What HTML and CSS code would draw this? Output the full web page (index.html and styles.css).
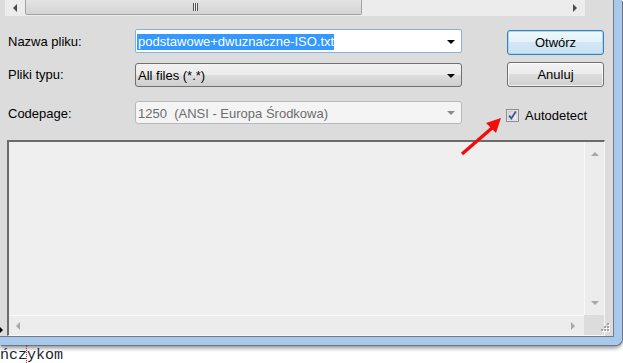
FILE: index.html
```html
<!DOCTYPE html>
<html lang="pl">
  <head>
    <meta charset="UTF-8" />
    <title>Otwórz plik</title>
    <link rel="stylesheet" href="styles.css">
  </head>
  <body>
    <div class="window">
      <div class="client">
        <div class="hscroll-top">
          <span class="arrow-left dark"></span>
          <div class="thumb"><span class="grip"></span></div>
          <span class="arrow-right dark"></span>
        </div>

        <div class="form">
          <div class="row row-name">
            <label for="filename">Nazwa pliku:</label>
            <div class="combo edit" id="filename">
              <span class="sel">podstawowe+dwuznaczne-ISO.txt</span>
              <i class="drop"></i>
            </div>
            <button class="btn default">Otwórz</button>
          </div>

          <div class="row row-type">
            <label>Pliki typu:</label>
            <div class="combo list">
              <span>All files (*.*)</span>
              <i class="drop"></i>
            </div>
            <button class="btn">Anuluj</button>
          </div>

          <div class="row row-code">
            <label>Codepage:</label>
            <div class="combo disabled">
              <span>1250&nbsp; (ANSI - Europa Środkowa)</span>
              <i class="drop"></i>
            </div>
            <div class="check">
              <svg width="13" height="13" viewBox="0 0 13 13">
                <defs>
                  <linearGradient id="cb" x1="0" y1="0" x2="1" y2="1">
                    <stop offset="0" stop-color="#cfcfcf" />
                    <stop offset="1" stop-color="#f7f7f7" />
                  </linearGradient>
                </defs>
                <rect x="0.5" y="0.5" width="12" height="12" fill="#f4f4f4" stroke="#8e8f8f" />
                <rect x="2" y="2" width="9" height="9" fill="url(#cb)" stroke="#b7b7b7" stroke-width="0.6" />
                <path d="M3.2 6.6 L5.4 9.4 L9.8 2.6" fill="none" stroke="#3f5596" stroke-width="1.8" />
              </svg>
              <span>Autodetect</span>
            </div>
          </div>
        </div>

        <div class="panel">
          <div class="content"></div>
          <div class="vscroll">
            <span class="arrow-up"></span>
            <span class="arrow-down"></span>
          </div>
          <div class="hscroll">
            <span class="arrow-left"></span>
            <span class="arrow-right"></span>
          </div>
          <div class="corner"></div>
        </div>

        <svg class="size-grip" width="11" height="11" viewBox="0 0 11 11">
          <g fill="#fff">
            <rect x="9" y="1" width="2" height="2" />
            <rect x="6" y="4" width="2" height="2" />
            <rect x="9" y="4" width="2" height="2" />
            <rect x="3" y="7" width="2" height="2" />
            <rect x="6" y="7" width="2" height="2" />
            <rect x="9" y="7" width="2" height="2" />
          </g>
          <g fill="#a3a3a3">
            <rect x="8" y="0" width="2" height="2" />
            <rect x="5" y="3" width="2" height="2" />
            <rect x="8" y="3" width="2" height="2" />
            <rect x="2" y="6" width="2" height="2" />
            <rect x="5" y="6" width="2" height="2" />
            <rect x="8" y="6" width="2" height="2" />
          </g>
        </svg>
        <span class="cursor-mark"></span>
      </div>
    </div>

    <div class="doc">ńczykom</div>

    <!-- red annotation arrow drawn over the dialog -->
    <svg class="pointer" width="623" height="363" viewBox="0 0 623 363">
      <line x1="462" y1="154" x2="492" y2="128" stroke="#f20d0d" stroke-width="3.4" />
      <polygon points="501,118 486,123 496,133" fill="#f20d0d" />
    </svg>
  </body>
</html>
```

FILE: styles.css
```css
body {
  margin: 0;
  width: 623px;
  height: 363px;
  overflow: hidden;
  background: #fff;
  font-family: "Liberation Sans", Arial, sans-serif;
  font-size: 13px;
  color: #000;
  position: relative;
}

.window {
  width: 622px;
  height: 345px;
  box-sizing: border-box;
  border-right: 8px solid #a9c8ea;
  border-bottom: 8px solid #a9c8ea;
  border-bottom-right-radius: 7px;
  box-shadow: 1px 1px 0 #66778d, 0 3px 4px rgba(0, 0, 0, 0.45);
  position: relative;
}

.client {
  position: relative;
  height: 337px;
  box-sizing: border-box;
  background: #dcdcdc;
  border-right: 1px solid #6f7d90;
  border-bottom: 1px solid #6f7d90;
}

/* top scrollbar of the file list (cut off) */
.hscroll-top {
  display: flex;
  align-items: center;
  width: 580px;
  height: 16px;
  margin-left: 5px;
  background: #ececec;
}

.hscroll-top .arrow-left {
  margin: 0 8px 1px 8px;
}

.thumb {
  width: 337px;
  height: 15px;
  margin-top: -1px;
  box-sizing: border-box;
  border: 1px solid #a3a3a3;
  border-top: none;
  border-radius: 0 0 2px 2px;
  background: linear-gradient(to bottom, #e4e4e4, #d3d3d3);
  display: flex;
  justify-content: center;
  align-items: center;
}

.grip {
  width: 5px;
  height: 8px;
  margin-left: 4px;
  background: repeating-linear-gradient(to right, #505050 0 1px, #f2f2f2 1px 2px);
}

.hscroll-top .arrow-right {
  margin: 0 8px 1px auto;
}

.arrow-left,
.arrow-right,
.arrow-up,
.arrow-down {
  display: block;
  width: 0;
  height: 0;
}

.arrow-left {
  border-top: 4px solid transparent;
  border-bottom: 4px solid transparent;
  border-right: 4px solid #a8a8a8;
}

.arrow-right {
  border-top: 4px solid transparent;
  border-bottom: 4px solid transparent;
  border-left: 4px solid #a8a8a8;
}

.arrow-left.dark {
  border-right-color: #4a4a4a;
}

.arrow-right.dark {
  border-left-color: #4a4a4a;
}

.arrow-up {
  border-left: 4px solid transparent;
  border-right: 4px solid transparent;
  border-bottom: 4px solid #a8a8a8;
}

.arrow-down {
  border-left: 4px solid transparent;
  border-right: 4px solid transparent;
  border-top: 4px solid #a8a8a8;
}

/* form rows */
.form {
  padding-left: 8px;
}

.row {
  display: flex;
  align-items: flex-start;
}

.row-name {
  margin-top: 13px;
}

.row-type {
  margin-top: 7px;
}

.row-code {
  margin-top: 14px;
}

label {
  width: 127px;
  line-height: 24px;
  padding-top: 1px;
}

.combo {
  width: 327px;
  height: 24px;
  box-sizing: border-box;
  display: flex;
  align-items: center;
  justify-content: space-between;
  padding: 1px 6px 0 2px;
  border-radius: 2px;
}

.combo.edit {
  background: #fff;
  border: 1px solid #88b0dc;
  padding-left: 1px;
}

.sel {
  background: #3399ff;
  color: #fff;
  line-height: 16px;
  padding: 0 0 0 1px;
}

.combo.list {
  margin-top: 1px;
  border: 1px solid #707070;
  border-radius: 3px;
  background: linear-gradient(to bottom, #f2f2f2 0%, #ebebeb 50%, #dddddd 50%, #cfcfcf 100%);
}

.combo.disabled {
  height: 23px;
  border: 1px solid #b5b9bc;
  border-radius: 3px;
  background: #f4f4f4;
  color: #6d6d6d;
}

.drop {
  width: 0;
  height: 0;
  border-left: 4px solid transparent;
  border-right: 4px solid transparent;
  border-top: 4px solid #000;
}

.combo.disabled .drop {
  border-top-color: #8a8a8a;
}

.btn {
  width: 97px;
  height: 25px;
  margin-left: 45px;
  padding: 0;
  box-sizing: border-box;
  font: inherit;
  color: #000;
  border: 1px solid #707070;
  border-radius: 3px;
  background: linear-gradient(to bottom, #f2f2f2 0%, #ebebeb 50%, #dddddd 50%, #cfcfcf 100%);
  box-shadow: inset 0 0 0 1px rgba(255, 255, 255, 0.7);
}

.btn.default {
  margin-top: 1px;
  border-color: #3c7fb1;
  background: linear-gradient(to bottom, #eef7fc 0%, #e4f1f9 50%, #d3e8f5 50%, #c8e1f1 100%);
  box-shadow: inset 0 0 0 1px #9fdaf6;
}

.check {
  display: flex;
  align-items: center;
  gap: 6px;
  margin: 7px 0 0 44px;
}

.check svg {
  display: block;
}

/* preview panel */
.panel {
  display: grid;
  grid-template-columns: 1fr 20px;
  grid-template-rows: 1fr 20px;
  width: 598px;
  height: 196px;
  margin: 14px 0 0 7px;
  box-sizing: border-box;
  border-top: 2px solid #6b6b6b;
  border-left: 2px solid #6b6b6b;
  border-right: 1px solid #f7f7f7;
  border-bottom: 1px solid #f7f7f7;
}

.content {
  background: #efefef;
}

.vscroll {
  background: #ececec;
  border-left: 1px solid #f8f8f8;
  display: flex;
  flex-direction: column;
  align-items: center;
  justify-content: space-between;
  padding: 10px 0 10px;
}

.hscroll {
  background: #ececec;
  border-top: 1px solid #f8f8f8;
  display: flex;
  align-items: center;
  justify-content: space-between;
  padding: 0 9px 0 7px;
}

.corner {
  background: #dcdcdc;
}

.size-grip {
  position: absolute;
  right: 3px;
  bottom: 2px;
}

.cursor-mark {
  position: absolute;
  left: 0;
  top: 327px;
  width: 0;
  height: 0;
  border-top: 3px solid transparent;
  border-bottom: 3px solid transparent;
  border-left: 3px solid #000;
}

/* text of the editor behind the dialog */
.doc {
  position: relative;
  padding-top: 2px;
  font-family: "Liberation Mono", "Courier New", monospace;
  font-size: 15px;
  line-height: 18px;
  color: #1c1c34;
}

.doc::before {
  content: "";
  position: absolute;
  left: 26px;
  top: 0;
  height: 22px;
  border-left: 1px dotted #d02020;
}

.pointer {
  position: absolute;
  top: 0;
  left: 0;
  pointer-events: none;
}
```
